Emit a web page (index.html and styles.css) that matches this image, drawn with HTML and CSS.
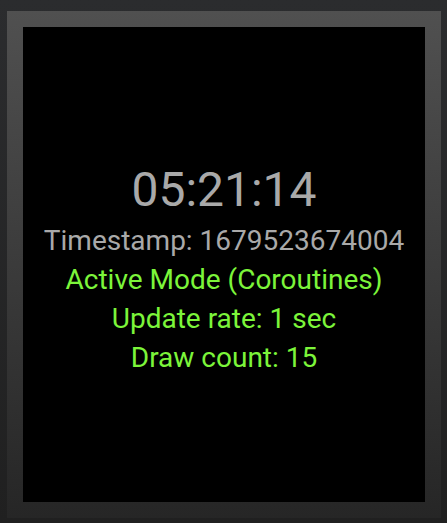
FILE: index.html
```html
<!DOCTYPE html>
<html>
<head>
<meta charset="utf-8">
<link rel="stylesheet" href="styles.css">
</head>
<body>
<div class="frame">
  <div class="screen">
    <div class="time">05:21:14</div>
    <div class="line gray">Timestamp: 1679523674004</div>
    <div class="line green">Active Mode (Coroutines)</div>
    <div class="line green">Update rate: 1 sec</div>
    <div class="line green">Draw count: 15</div>
  </div>
</div>
</body>
</html>
```
FILE: styles.css
```css
html, body {
  margin: 0;
  padding: 0;
}
body {
  width: 447px;
  height: 523px;
  background: linear-gradient(to bottom, #2b2c2e, #202020);
  padding: 11px 6px 5px 7px;
  box-sizing: border-box;
  font-family: Roboto, "Noto Sans", sans-serif;
}
.frame {
  width: 434px;
  height: 507px;
  box-sizing: border-box;
  padding: 16px;
  background: linear-gradient(to bottom, #505050, #262626);
}
.screen {
  width: 100%;
  height: 100%;
  box-sizing: border-box;
  padding-top: 9px;
  background: #000;
  display: flex;
  flex-direction: column;
  align-items: center;
  justify-content: center;
}
.time {
  font-size: 48px;
  line-height: 56px;
  margin-bottom: 3px;
  color: #a9a9a9;
}
.line {
  font-size: 28px;
  line-height: 39px;
  white-space: nowrap;
}
.gray { color: #a9a9a9; }
.green { color: #7cf53a; }
```
